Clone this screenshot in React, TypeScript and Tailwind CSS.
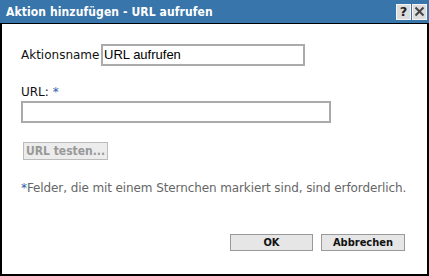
import React from 'react';

const body = { fontFamily: '"DejaVu Sans", Verdana, sans-serif' };
const cond = { fontFamily: '"DejaVu Sans Condensed", "DejaVu Sans", sans-serif' };

const App = () => {
  return (
    <div className="w-[429px] h-[276px] bg-white flex flex-col" style={body}>
      {/* Title bar */}
      <div className="h-6 bg-[#3775aa] border-b border-black flex items-center justify-between pl-[6px] pr-[2px]">
        <span className="text-white font-bold text-[12px] leading-none whitespace-nowrap tracking-[0.1px]" style={cond}>
          Aktion hinzufügen - URL aufrufen
        </span>
        <div className="flex gap-px">
          <div className="w-[15px] h-[16px] bg-[#dcdcdc] border border-[#f4f4f4] flex items-center justify-center text-[13px] font-bold text-[#222] leading-none">
            ?
          </div>
          <div className="w-[15px] h-[16px] bg-[#dcdcdc] border border-[#f4f4f4] flex items-center justify-center">
            <svg width="11" height="11" viewBox="0 0 11 11">
              <path d="M1.5 1.5 L9.5 9.5 M9.5 1.5 L1.5 9.5" stroke="#444" strokeWidth="2" />
            </svg>
          </div>
        </div>
      </div>

      {/* Body */}
      <div className="flex-1 flex flex-col border-x-2 border-b-2 border-black pl-[19px] pr-[20px]">
        <div className="mt-[20px] flex items-center">
          <span className="w-[80px] text-[12px] text-[#111]">Aktionsname</span>
          <div className="w-[204px] h-[22px] border-2 border-[#aaa] flex items-center pl-[1px] text-[13px] text-black" style={{ fontFamily: '"Liberation Sans", Arial, sans-serif' }}>
            URL aufrufen
          </div>
        </div>

        <div className="mt-[19px] text-[12px] text-[#111] leading-[14px]">
          URL: <span className="text-[#2a5ea8]">*</span>
        </div>
        <div className="mt-[2px] w-[310px] h-[22px] border-2 border-[#aaa]" />

        <div className="mt-[19px] ml-[2px] w-[85px] h-[18px] bg-[#ececec] border border-[#bbb] flex items-center justify-center text-[12px] font-bold text-[#999] leading-none whitespace-nowrap" style={cond}>
          URL testen...
        </div>

        <div className="mt-[21px] text-[12px] text-[#666] leading-[14px] whitespace-nowrap tracking-[-0.1px]">
          <span className="text-[#2a5ea8]">*</span>Felder, die mit einem Sternchen markiert sind, sind erforderlich.
        </div>

        <div className="mt-[39px] flex justify-end gap-[8px] pr-[2px]">
          <div className="w-[83px] h-[17px] bg-[#e6e6e6] border border-[#999] flex items-center justify-center text-[11px] font-bold text-[#111] leading-none" style={cond}>
            OK
          </div>
          <div className="w-[84px] h-[17px] bg-[#e6e6e6] border border-[#999] flex items-center justify-center text-[11px] font-bold text-[#111] leading-none" style={cond}>
            Abbrechen
          </div>
        </div>
      </div>
    </div>
  );
};

export default App;
